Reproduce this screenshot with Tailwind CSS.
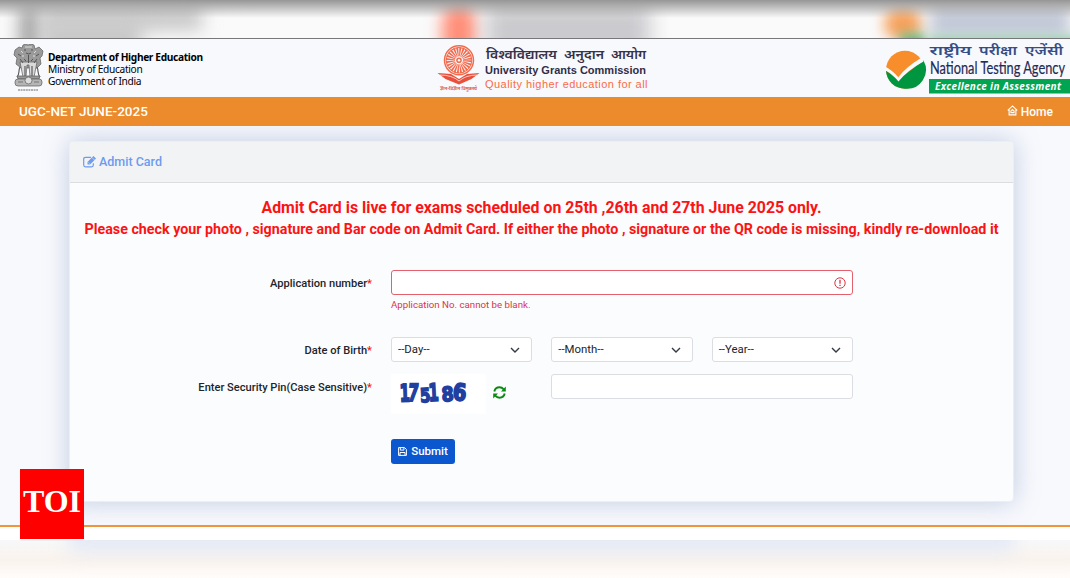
<!DOCTYPE html>
<html lang="en">
<head>
    <meta charset="UTF-8">
    <meta name="viewport" content="width=device-width, initial-scale=1.0">
    <title>UGC-NET June 2025 Admit Card</title>
    <script src="https://cdn.jsdelivr.net/npm/@tailwindcss/browser@4"></script>
</head>
<body class="w-[1070px] h-[578px] overflow-hidden bg-[#f8f9fd] font-['Roboto',sans-serif] text-[#212529]">

    <!-- Blurred top strip -->
    <div class="relative h-[38px] overflow-hidden bg-[#fafafa]">
        <div class="absolute left-[20px] top-[6px] w-[20px] h-[50px] bg-[#9c9c9c] blur-[9px]"></div>
        <div class="absolute left-[42px] top-[6px] w-[160px] h-[24px] bg-[#c6c6c6] blur-[9px]"></div>
        <div class="absolute left-[42px] top-[20px] w-[100px] h-[40px] bg-[#c8c8c8] blur-[9px]"></div>
        <div class="absolute left-[442px] top-[4px] w-[34px] h-[54px] rounded-t-full bg-[#ff8e78] blur-[8px]"></div>
        <div class="absolute left-[486px] top-[4px] w-[164px] h-[54px] bg-[#cbcbcf] blur-[10px]"></div>
        <div class="absolute left-[884px] top-[8px] w-[38px] h-[32px] rounded-full bg-[#f5a25e] blur-[7px]"></div>
        <div class="absolute left-[900px] top-[34px] w-[26px] h-[16px] bg-[#5cb472] blur-[6px]"></div>
        <div class="absolute left-[930px] top-[6px] w-[140px] h-[32px] bg-[#c2c8d7] blur-[8px]"></div>
        <div class="absolute left-[930px] top-[35px] w-[150px] h-[12px] bg-[#9fd0b4] blur-[5px]"></div>
        <div class="absolute inset-x-0 top-0 h-[18px] bg-linear-to-b from-[#969696] to-transparent"></div>
    </div>

    <!-- Header -->
    <header class="h-[59px] border-t border-[#77777a] bg-[#f8f9fc] flex">
        <div class="flex w-[436px] pl-[13px] pt-[5px]">
            <svg class="w-[31px] h-[48px] shrink-0" viewBox="0 0 31 48">
                <g fill="#9a9a9a" stroke="#5d5d5d" stroke-width=".7">
                    <path d="M10 1l3-1 2 1 3-1 3 1 1 4 4-2 4 4-1 5-2 2 1 6-4 4h-16l-5-4 1-6-3-3 1-5 4-3 3 1z"/>
                    <path d="M7 18l3 15h3l1-12 2 0 1 12h4l3-15z" fill="#d9d9d9"/>
                    <path d="M7 23c-2 4 0 7-3 10M24 23c2 4 0 7 3 10M12 22v11M19 22v11" fill="none" stroke-width="1.200"/>
                    <path d="M4 32h23l-1 3H5z"/>
                    <rect x="2" y="35" width="27" height="7" rx="3" fill="#b5b5b5"/>
                    <circle cx="15.500" cy="36.500" r="3.500" fill="#ddd"/>
                    <path d="M5 38h5M21 38h5" fill="none"/>
                </g>
                <path d="M11 6h2M18 6h2M13 9q2.500 2 5 0M5 10l3 2M23 12l3-2M11 15l2 2M18 17l2-2M15.500 11v8M7 15l3 4M24 15l-3 4" fill="none" stroke="#555"/>
                <path d="M12 3h7M9 12h2M20 12h2M8 7l2 2M21 9l2-2" fill="none" stroke="#ddd"/>
                <path d="M5 46h20" stroke="#999" stroke-width="1.500" stroke-dasharray="2 .6"/>
            </svg>
            <div class="pl-[4px] pt-[7px] font-['Noto_Sans',sans-serif] text-[10.200px] leading-[12px] text-black whitespace-nowrap">
                <div class="font-bold tracking-[-0.360px]">Department of Higher Education</div>
                <div class="tracking-[-0.330px]">Ministry of Education</div>
                <div class="tracking-[-0.330px]">Government of India</div>
            </div>
        </div>

        <svg class="w-[214px] h-[54px] shrink-0" viewBox="436 39 214 54">
            <circle cx="459" cy="60.300" r="14.500" fill="none" stroke="#f46a4c" stroke-width="1.500"/>
            <circle cx="459" cy="60.300" r="8.500" fill="none" stroke="#f46a4c" stroke-width="9" stroke-dasharray="1.400 .825"/>
            <circle cx="459" cy="60.300" r="12.800" fill="none" stroke="#f46a4c" stroke-width="1"/>
            <circle cx="459" cy="60.300" r="2.800" fill="#f46a4c"/>
            <circle cx="459" cy="60.300" r="1.200" fill="#fff"/>
            <path d="M437.500 73l13.500 1 8 5 8-5 12.500-1-8 6-12.500 5.500-13.500-5.500z" fill="#e94f3a"/>
            <path d="M440 75q12 0 19 6 7-6 18-6" fill="none" stroke="#fff" stroke-width=".7"/>
            <text x="440" y="89.500" textLength="37" lengthAdjust="spacingAndGlyphs" class="font-['Noto_Sans',sans-serif] text-[5px] font-bold" fill="#d9604c">ज्ञान-विज्ञान विमुक्तये</text>
            <g class="font-['Noto_Sans',sans-serif] text-[12.500px] font-semibold" fill="#35324a">
                <text x="486" y="59" textLength="71" lengthAdjust="spacingAndGlyphs">विश्वविद्यालय</text>
                <text x="564" y="59" textLength="40" lengthAdjust="spacingAndGlyphs">अनुदान</text>
                <text x="611" y="59" textLength="35" lengthAdjust="spacingAndGlyphs">आयोग</text>
            </g>
            <text x="485" y="74" textLength="161" class="font-['Liberation_Sans',sans-serif] text-[11px] font-bold" fill="#302d48">University Grants Commission</text>
            <text x="485" y="87.500" textLength="162.500" class="font-['Liberation_Sans',sans-serif] text-[11px]" fill="#f96b48">Quality higher education for all</text>
        </svg>

        <svg class="w-[186px] h-[56px] shrink-0 ml-auto" viewBox="884 39 186 56">
            <circle cx="905" cy="69.700" r="19" fill="#f78d2b"/>
            <path d="M886 70.500L898 80 923.500 60.500a19 19 0 0 1-18.500 28.200a19 19 0 0 1-19-18.200z" fill="#00963f"/>
            <path d="M885 66.500q7 3.500 13.300 10.700Q906 67 921 58l2.500 3.500Q907 70.500 898.500 81.500 892.500 74 885.500 70.500z" fill="#f8f9fc"/>
            <g class="font-['Noto_Sans',sans-serif] text-[12.500px] font-semibold" fill="#354d86">
                <text x="929.500" y="55" textLength="42" lengthAdjust="spacingAndGlyphs">राष्ट्रीय</text>
                <text x="979" y="55" textLength="38" lengthAdjust="spacingAndGlyphs">परीक्षा</text>
                <text x="1025" y="55" textLength="38" lengthAdjust="spacingAndGlyphs">एजेंसी</text>
            </g>
            <text x="930" y="73.500" textLength="135" lengthAdjust="spacingAndGlyphs" class="font-['Lato',sans-serif] text-[18px]" fill="#1e2b57" stroke="#1e2b57" stroke-width=".2">National Testing Agency</text>
            <rect x="929" y="79" width="141" height="14.500" fill="#00a451"/>
            <text x="935" y="90" textLength="126" class="font-['Open_Sans',sans-serif] text-[10px] font-bold italic" fill="#fff">Excellence in Assessment</text>
        </svg>
    </header>

    <!-- Navbar -->
    <nav class="h-[29px] bg-[#eb8b2b] flex items-center justify-between pl-[19px] pr-[17px] text-white font-medium">
        <span class="text-[13.500px] -mt-px">UGC-NET JUNE-2025</span>
        <a href="#" class="flex items-center text-[12px] pt-px">
            <svg class="w-[11px] h-[11px] mr-[3px] -mt-[4px]" viewBox="0 0 12 12" fill="none" stroke="#fff" stroke-width="1.200">
                <path d="M.8 5.800L6 1l5.200 4.800M2.300 5v5.800h7.400V5M4.300 8V6.500L6 5l1.700 1.500V8.300H4.300z"/>
            </svg>Home
        </a>
    </nav>

    <!-- Main Content -->
    <main class="h-[414px] pl-[69px] pt-[15px] pr-[56px] overflow-hidden">
        <div class="h-[361px] rounded-[4px] bg-[#fbfcfe] border border-[#eceef3] shadow-[0_0_26px_rgba(95,125,175,0.36)]">
            <div class="h-[41px] bg-[#f2f3f5] border-b border-[#dcdde0] rounded-t-[3px] flex items-center px-[13px] text-[12.500px] font-medium text-[#6c9bf0]">
                <svg class="w-[13px] h-[12px] mr-[3px]" viewBox="0 0 13 12" fill="none" stroke="#6c9bf0" stroke-width="1.200">
                    <path d="M8 1.300H2.500Q.7 1.300.7 3v6q0 1.800 1.800 1.800h6q1.800 0 1.800-1.800V7.200"/>
                    <path d="M4.500 8.500V5.900L10.400 0l2.600 2.600-5.900 5.900z" fill="#6c9bf0" stroke="none"/>
                    <path d="M5.500 6.500l1.200 1.200M9 1.600l2.400 2.400" stroke="#f2f3f5" stroke-width=".6"/>
                </svg>
                Admit Card
            </div>

            <div class="pt-[15px] text-center font-bold text-[#fb1414] whitespace-nowrap">
                <p class="text-[15.860px] leading-[20px]">Admit Card is live for exams scheduled on 25th ,26th and 27th June 2025 only.</p>
                <p class="text-[14.290px] leading-[23px]">Please check your photo , signature and Bar code on Admit Card. If either the photo , signature or the QR code is missing, kindly re-download it</p>
            </div>

            <form class="pt-[29px] text-[11.400px]">
                <div class="flex h-[67px]">
                    <label class="w-[302px] pt-[6px] text-right text-[11.100px] leading-[16px] font-medium">Application number<span class="text-[#fb1414]">*</span></label>
                    <div class="ml-[19px] w-[462px]">
                        <div class="h-[25px] rounded-[3px] border border-[#e4606d] bg-white flex items-center justify-end pr-[6px]">
                            <svg class="w-[12px] h-[12px]" viewBox="0 0 12 12" fill="none" stroke="#dc3545">
                                <circle cx="6" cy="6" r="5.200"/>
                                <path d="M6 2.800v3.900M6 7.700v1.300" stroke-width="1.300"/>
                            </svg>
                        </div>
                        <p class="pt-[3px] text-[9.700px] leading-[14px] text-[#dc3545]">Application No. cannot be blank.</p>
                    </div>
                </div>

                <div class="flex h-[37px]">
                    <label class="w-[302px] pt-[6px] text-right text-[11.100px] leading-[16px] font-medium">Date of Birth<span class="text-[#fb1414]">*</span></label>
                    <div class="ml-[19px] grid grid-cols-3 gap-[19px] w-[462px]">
                        <div class="h-[25px] rounded-[3px] border border-[#dadde2] bg-white flex items-center justify-between pl-[6px] pr-[11px]">
                            <span class="pt-px">--Day--</span>
                            <svg class="w-[10px] h-[6px]" viewBox="0 0 10 6" fill="none" stroke="#343a40" stroke-width="1.400"><path d="M1 1l4 4 4-4"/></svg>
                        </div>
                        <div class="h-[25px] rounded-[3px] border border-[#dadde2] bg-white flex items-center justify-between pl-[6px] pr-[11px]">
                            <span class="pt-px">--Month--</span>
                            <svg class="w-[10px] h-[6px]" viewBox="0 0 10 6" fill="none" stroke="#343a40" stroke-width="1.400"><path d="M1 1l4 4 4-4"/></svg>
                        </div>
                        <div class="h-[25px] rounded-[3px] border border-[#dadde2] bg-white flex items-center justify-between pl-[6px] pr-[11px]">
                            <span class="pt-px">--Year--</span>
                            <svg class="w-[10px] h-[6px]" viewBox="0 0 10 6" fill="none" stroke="#343a40" stroke-width="1.400"><path d="M1 1l4 4 4-4"/></svg>
                        </div>
                    </div>
                </div>

                <div class="flex h-[65px]">
                    <label class="w-[302px] pt-[6px] text-right text-[11.100px] leading-[16px] font-medium">Enter Security Pin(Case Sensitive)<span class="text-[#fb1414]">*</span></label>
                    <!-- Captcha -->
                    <svg class="ml-[19px] w-[95px] h-[40px] bg-white" viewBox="0 0 95 40">
                        <g fill="#203f9f" stroke="#203f9f" stroke-width="1.800" class="font-['DejaVu_Sans',sans-serif] text-[22px] font-bold">
                            <text transform="translate(9 27.500) rotate(-2) scale(.66 1.080)">1</text>
                            <text transform="translate(16.500 27) skewX(-5) scale(.68 1.080)">7</text>
                            <text transform="translate(29.500 28.500) rotate(-4) scale(.68 .88)">5</text>
                            <text transform="translate(38 27) rotate(-3) scale(.66 1.080)">1</text>
                            <text transform="translate(51 27.500) rotate(-4) scale(.8 .9)">8</text>
                            <text transform="translate(61.500 26) rotate(3) scale(.88 1.050)">6</text>
                        </g>
                    </svg>
                    <svg class="ml-[7px] mt-[12px] w-[13px] h-[13px]" viewBox="0 0 13 13" fill="none" stroke="#088a12" stroke-width="1.900">
                        <path d="M1.300 5.500Q2.300 1.300 6.500 1.300q2.500 0 4.300 2M11.700 7.500q-1 4.200-5.200 4.200-2.500 0-4.300-2"/>
                        <path d="M12.800.500v5H8zM.2 12.500v-5H5z" fill="#088a12" stroke="none"/>
                    </svg>
                    <input type="text" class="ml-[45px] w-[302px] h-[25px] rounded-[3px] border border-[#dadde2] bg-white">
                </div>

                <button type="button" class="ml-[321px] w-[64px] h-[25px] rounded-[3px] bg-[#0b57d0] text-white text-[11.500px] font-medium flex items-center justify-center">
                    <svg class="w-[9px] h-[9px] mr-[4px]" viewBox="0 0 9 9" fill="none" stroke="#fff">
                        <path d="M.6.600h6l1.800 1.800v6H.6zM2.300.800v2.300h3.600V.800M2 8.300V5.500h5v2.800"/>
                    </svg>
                    Submit
                </button>
            </form>
        </div>
    </main>

    <!-- Footer -->
    <footer class="relative -mt-[15px]">
        <div class="h-[13px] box-content border-t-2 border-[#f0953a] bg-white"></div>
        <div class="relative h-[39px] overflow-hidden bg-linear-to-b from-[#f7f8fa] via-[#faf3ed] to-[#fffdfb]">
            <div class="absolute left-[70px] -top-[20px] w-[944px] h-[32px] bg-[#e4e9f5] blur-[9px]"></div>
        </div>
        <!-- TOI badge -->
        <div class="absolute left-[20px] -top-[56px] w-[64px] h-[70px] bg-[#f00] text-white font-['Liberation_Serif',serif] font-bold text-[32px] leading-[64px] text-center">TOI</div>
    </footer>

</body>
</html>
